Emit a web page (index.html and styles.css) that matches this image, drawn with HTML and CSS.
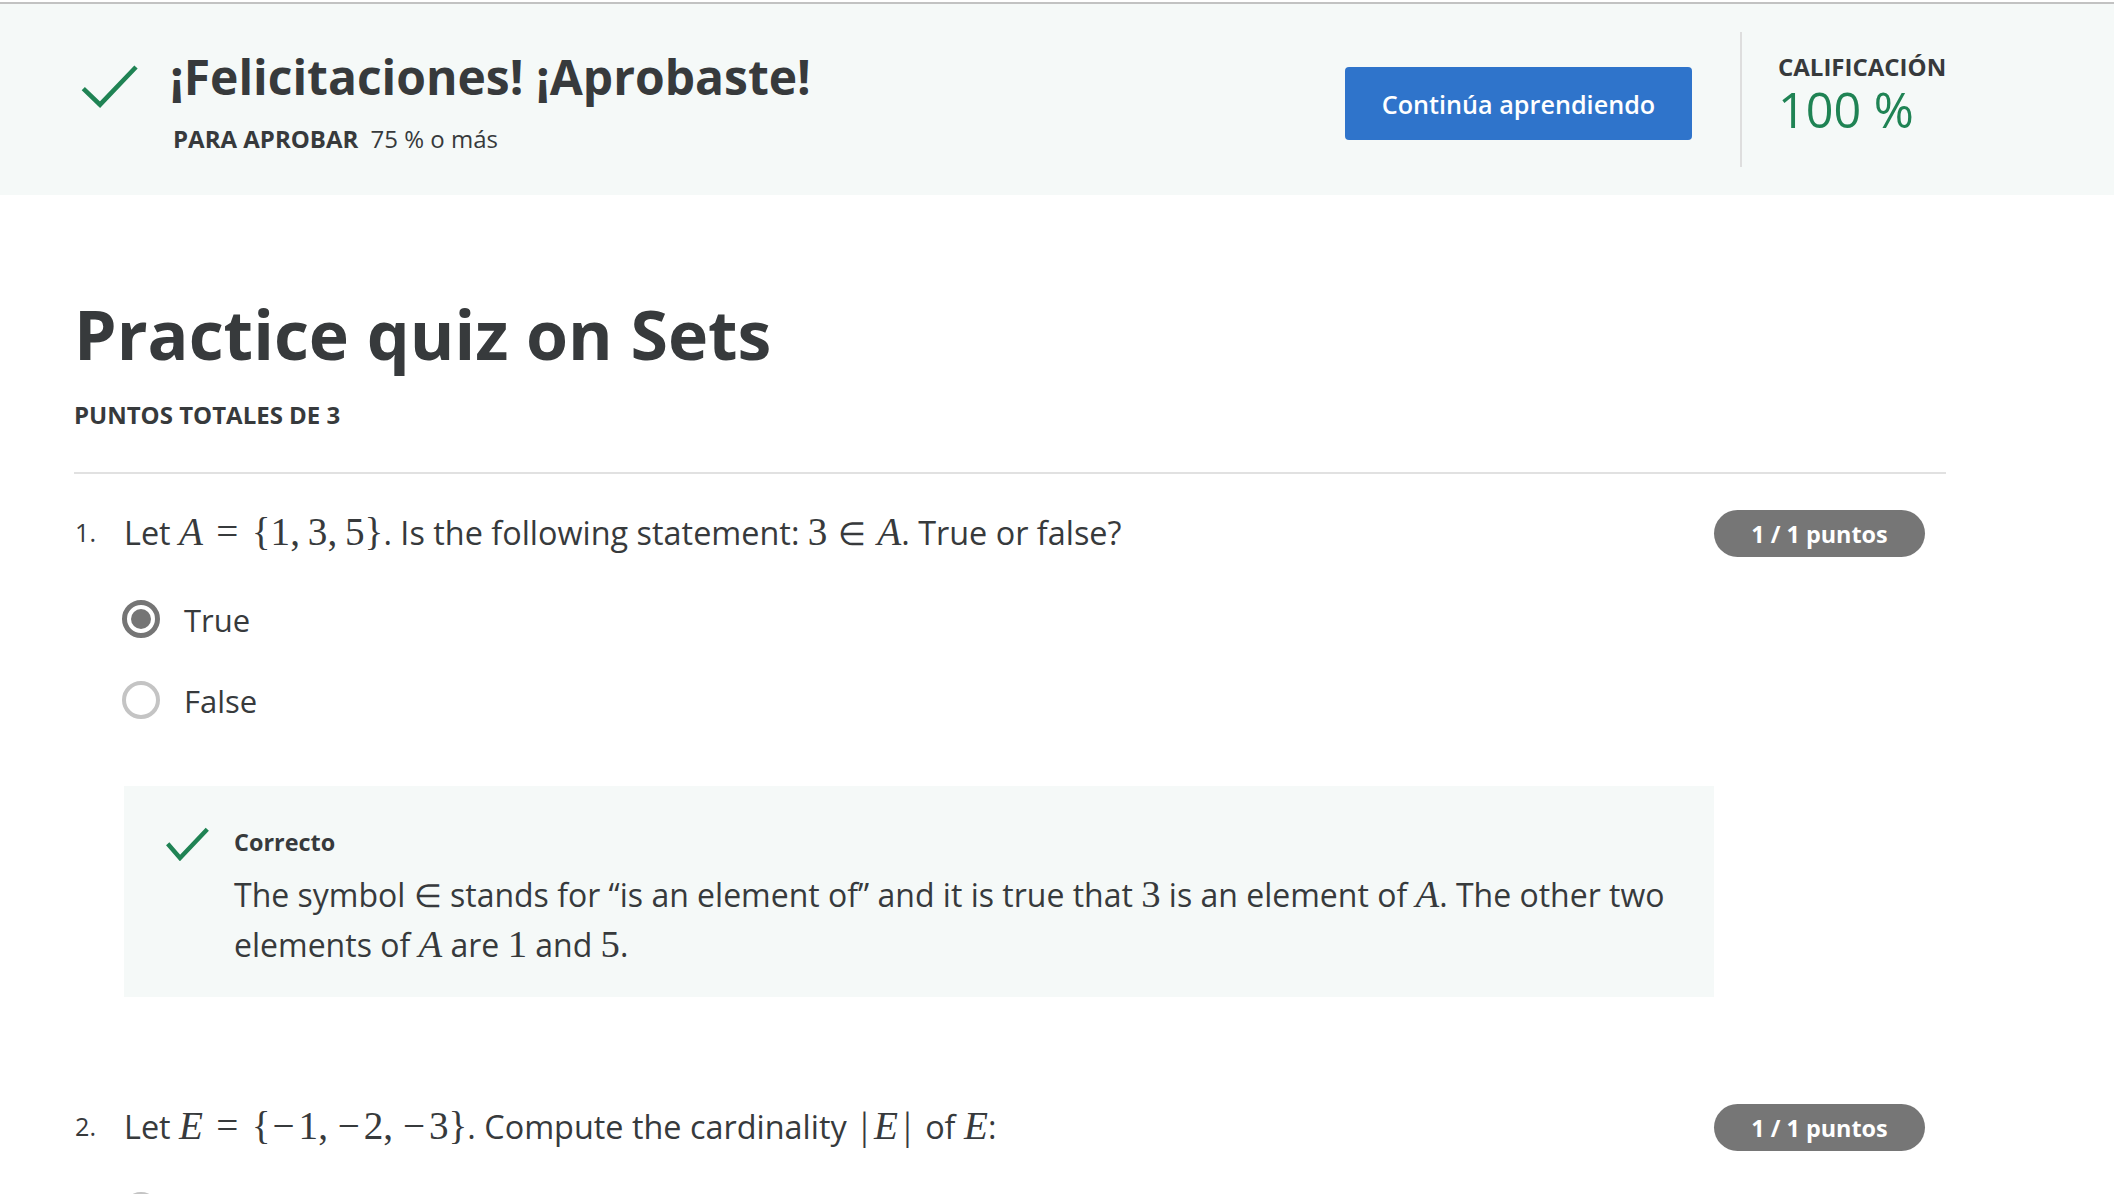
FILE: index.html
```html
<!DOCTYPE html>
<html lang="es">
<head>
<meta charset="utf-8">
<title>Practice quiz on Sets</title>
<link rel="stylesheet" href="styles.css">
</head>
<body>
<div class="topline"></div>
<header class="banner">
  <div class="banner-inner">
    <div class="pass">
      <svg class="pass-icon" width="58" height="44" viewBox="0 0 58 44" aria-hidden="true">
        <polyline points="3.3,24.7 20,40.7 56,3" fill="none" stroke="#1f8354" stroke-width="4.6" stroke-linecap="butt" stroke-linejoin="miter"/>
      </svg>
      <div class="pass-text">
        <h2 class="pass-title">¡Felicitaciones! ¡Aprobaste!</h2>
        <p class="pass-req"><span class="overline req-label">PARA APROBAR</span> 75 % o más</p>
      </div>
    </div>
    <button class="btn-primary" type="button">Continúa aprendiendo</button>
    <div class="vdivider"></div>
    <div class="grade">
      <div class="overline grade-label">CALIFICACIÓN</div>
      <div class="grade-value">100 %</div>
    </div>
  </div>
</header>

<main class="content">
  <h1 class="quiz-title">Practice quiz on Sets</h1>
  <div class="overline total">PUNTOS TOTALES DE 3</div>
  <hr class="rule">

  <section class="question">
    <div class="q-num">1.</div>
    <div class="q-body">
      <div class="q-text">Let <span class="m"><i>A</i><span class="rel">=</span>{1,<span class="th"></span>3,<span class="th"></span>5}</span>. Is the following statement: <span class="m">3<span class="rel sym">∈</span><i>A</i></span>. True or false?</div>
      <div class="options">
        <div class="option"><span class="radio radio-on"><span class="dot"></span></span><span class="opt-label">True</span></div>
        <div class="option"><span class="radio"></span><span class="opt-label">False</span></div>
      </div>
      <div class="feedback">
        <svg class="fb-icon" width="44" height="34" viewBox="0 0 44 34" aria-hidden="true">
          <polyline points="1.7,16.7 14,31 41.3,2.3" fill="none" stroke="#1f8354" stroke-width="4.4"/>
        </svg>
        <div class="fb-body">
          <div class="fb-title">Correcto</div>
          <p class="fb-text"><span class="ln">The symbol <span class="m sym">∈</span> stands for “is an element of” and it is true that <span class="m">3</span> is an element of <span class="m"><i>A</i></span>. The other two</span> <span class="ln">elements of <span class="m"><i>A</i></span> are <span class="m">1</span> and <span class="m">5</span>.</span></p>
        </div>
      </div>
    </div>
    <div class="q-score"><span class="badge">1 / 1 puntos</span></div>
  </section>

  <section class="question q-next">
    <div class="q-num">2.</div>
    <div class="q-body">
      <div class="q-text">Let <span class="m"><i>E</i><span class="rel">=</span>{<span class="neg">−</span>1,<span class="th"></span><span class="neg">−</span>2,<span class="th"></span><span class="neg">−</span>3}</span>. Compute the cardinality <span class="m"><span class="bar">|</span><i>E</i><span class="bar">|</span></span> of <span class="m"><i>E</i></span>:</div>
      <div class="options">
        <div class="option"><span class="radio"></span></div>
      </div>
    </div>
    <div class="q-score"><span class="badge">1 / 1 puntos</span></div>
  </section>
</main>
</body>
</html>
```

FILE: styles.css
```css
html, body {
  margin: 0;
  padding: 0;
  overflow: hidden;
  background: #ffffff;
}

body {
  font-family: "Open Sans", "Noto Sans", "Liberation Sans", sans-serif;
  color: #373a3c;
}

.topline {
  height: 2px;
  margin-top: 2px;
  background: #c2c2c2;
}

/* ---------- banner ---------- */
.banner {
  background: #f5f9f8;
}

.banner-inner {
  display: flex;
  align-items: flex-start;
  padding: 42px 168px 0 74px;
  height: 149px;
}

.pass {
  display: flex;
  align-items: flex-start;
  flex: 1;
}

.pass-icon {
  display: block;
  margin: 18px 0 0 6px;
  width: 58px;
  height: 44px;
}

.pass-text {
  margin-left: 32px;
}

.pass-title {
  margin: 0;
  font-size: 48px;
  line-height: 62px;
  font-weight: 700;
  color: #373a3c;
}

.pass-req {
  margin: 15px 0 0 3px;
  font-size: 24px;
  line-height: 32px;
  color: #373a3c;
}

.overline {
  font-size: 24px;
  line-height: 32px;
  font-weight: 700;
  color: #373a3c;
}

.req-label {
  margin-right: 6px;
}

.btn-primary {
  margin-top: 21px;
  width: 347px;
  height: 73px;
  border: none;
  border-radius: 4px;
  background: #2f74cb;
  color: #ffffff;
  font-family: "Open Sans", "Noto Sans", sans-serif;
  font-size: 25.2px;
  font-weight: 600;
  padding: 0;
}

.vdivider {
  width: 2px;
  height: 135px;
  margin: -14px 36px 0 48px;
  background: #dedede;
}

.grade {
  width: 168px;
  margin-top: 7px;
}

.grade-label {
  line-height: 28px;
}

.grade-value {
  font-size: 48.5px;
  line-height: 56px;
  font-weight: 400;
  color: #1f8354;
}

/* ---------- content ---------- */
.content {
  padding: 0 168px 0 74px;
}

.quiz-title {
  margin: 96px 0 0 0;
  font-size: 68px;
  line-height: 86px;
  font-weight: 700;
  color: #373a3c;
}

.total {
  margin-top: 22px;
}

.rule {
  margin: 41px 0 0 0;
  border: none;
  height: 2px;
  background: #e1e1e1;
}

.question {
  display: grid;
  grid-template-columns: 50px 1590px 1fr;
  margin-top: 36px;
}

.q-next {
  margin-top: 107px;
}

.q-num {
  font-size: 25.2px;
  line-height: 44px;
  padding-left: 1px;
}

.q-text {
  font-size: 32.4px;
  line-height: 44px;
  color: #373a3c;
}

.m {
  font-family: "Liberation Serif", "DejaVu Serif", serif;
  font-size: 1.21em;
  white-space: nowrap;
}

.m i {
  font-style: italic;
}

.sym {
  font-family: "DejaVu Sans", "Liberation Serif", serif;
  font-weight: 200;
  font-size: 0.82em;
}

.m.sym {
  font-size: 1em;
}

.bar {
  margin: 0 0.14em;
}

.neg {
  margin: 0 0.1em 0 0.05em;
}

.rel {
  margin: 0 0.34em;
}

.th {
  display: inline-block;
  width: 0.2em;
}

.options {
  margin-top: 22px;
}

.option {
  display: flex;
  align-items: center;
  height: 81px;
}

.radio {
  box-sizing: border-box;
  width: 38px;
  height: 38px;
  margin-left: -2px;
  border-radius: 50%;
  border: 4px solid #c4c4c4;
  display: flex;
  align-items: center;
  justify-content: center;
  flex: none;
}

.radio-on {
  border-color: #757575;
  border-width: 5px;
}

.dot {
  width: 20px;
  height: 20px;
  border-radius: 50%;
  background: #757575;
}

.opt-label {
  margin-left: 24px;
  font-size: 31px;
  line-height: 44px;
  padding-top: 3px;
}

.feedback {
  margin-top: 46px;
  background: #f5f9f8;
  display: flex;
  align-items: flex-start;
  padding: 40px 12px 28px 42px;
}

.fb-icon {
  display: block;
  margin-top: 1px;
  flex: none;
}

.fb-body {
  margin-left: 24px;
}

.fb-title {
  font-size: 23.4px;
  line-height: 32px;
  font-weight: 700;
}

.fb-text {
  margin: 12px 0 0 0;
  font-size: 32px;
  line-height: 48px;
}

.ln {
  white-space: nowrap;
}

.badge {
  display: inline-flex;
  align-items: center;
  justify-content: center;
  width: 211px;
  height: 47px;
  border-radius: 24px;
  background: #767676;
  color: #ffffff;
  font-size: 23.4px;
  font-weight: 700;
}
```
